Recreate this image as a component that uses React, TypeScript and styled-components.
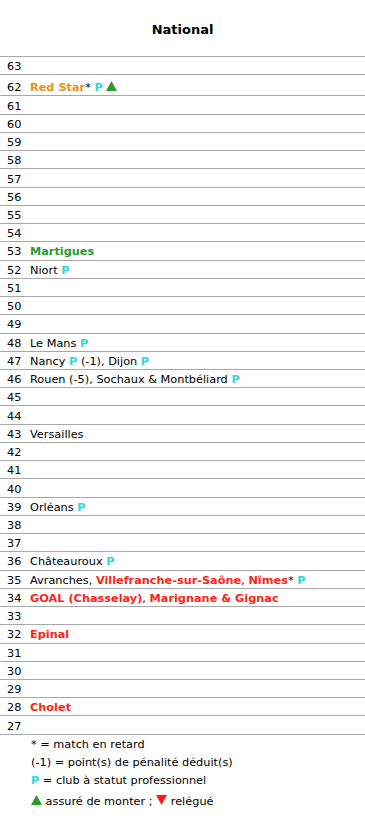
import styled, {createGlobalStyle} from "styled-components";

const GlobalStyle = createGlobalStyle`
    body {
        margin: 0;
        background: #fff;
        font-family: 'DejaVu Sans', Verdana, sans-serif;
        font-size: 11.3px;
        color: #000;
    }
`

type Team = {name: string, color?: 'orange' | 'green' | 'red', star?: boolean, pro?: boolean, up?: boolean, note?: string}

const rows: {pts: number, teams: Team[]}[] = [
    {pts: 63, teams: []},
    {pts: 62, teams: [{name: 'Red Star', color: 'orange', star: true, pro: true, up: true}]},
    {pts: 61, teams: []},
    {pts: 60, teams: []},
    {pts: 59, teams: []},
    {pts: 58, teams: []},
    {pts: 57, teams: []},
    {pts: 56, teams: []},
    {pts: 55, teams: []},
    {pts: 54, teams: []},
    {pts: 53, teams: [{name: 'Martigues', color: 'green'}]},
    {pts: 52, teams: [{name: 'Niort', pro: true}]},
    {pts: 51, teams: []},
    {pts: 50, teams: []},
    {pts: 49, teams: []},
    {pts: 48, teams: [{name: 'Le Mans', pro: true}]},
    {pts: 47, teams: [{name: 'Nancy', pro: true, note: ' (-1)'}, {name: 'Dijon', pro: true}]},
    {pts: 46, teams: [{name: 'Rouen', note: ' (-5)'}, {name: 'Sochaux & Montbéliard', pro: true}]},
    {pts: 45, teams: []},
    {pts: 44, teams: []},
    {pts: 43, teams: [{name: 'Versailles'}]},
    {pts: 42, teams: []},
    {pts: 41, teams: []},
    {pts: 40, teams: []},
    {pts: 39, teams: [{name: 'Orléans', pro: true}]},
    {pts: 38, teams: []},
    {pts: 37, teams: []},
    {pts: 36, teams: [{name: 'Châteauroux', pro: true}]},
    {pts: 35, teams: [{name: 'Avranches'}, {name: 'Villefranche-sur-Saône', color: 'red'}, {name: 'Nîmes', color: 'red', star: true, pro: true}]},
    {pts: 34, teams: [{name: 'GOAL (Chasselay)', color: 'red'}, {name: 'Marignane & Gignac', color: 'red'}]},
    {pts: 33, teams: []},
    {pts: 32, teams: [{name: 'Epinal', color: 'red'}]},
    {pts: 31, teams: []},
    {pts: 30, teams: []},
    {pts: 29, teams: []},
    {pts: 28, teams: [{name: 'Cholet', color: 'red'}]},
    {pts: 27, teams: []},
]

const colors = {orange: '#e8921c', green: '#2b9a2b', red: '#ff2418'}

const Triangle = ({down}: {down?: boolean}) => (
    <TriangleIcon width="11" height="10" viewBox="0 0 11 10">
        {down
            ? <polygon points="0,0 11,0 5.5,10" fill="#ff1a1a"/>
            : <polygon points="0,10 11,10 5.5,0" fill="#2b9a2b"/>}
    </TriangleIcon>
)

const TeamCell = ({team}: {team: Team}) => (
    <>
        <TeamName $color={team.color}>{team.name}</TeamName>
        {team.star && '*'}
        {team.pro && <> <Pro>P</Pro></>}
        {team.note}
        {team.up && <> <Triangle/></>}
    </>
)

export default function App() {
    return (
        <Page>
            <GlobalStyle/>
            <Title>National</Title>
            <Table>
                {rows.map(row => (
                    <Row key={row.pts}>
                        <Points>{row.pts}</Points>
                        <Teams>
                            {row.teams.map((t, i) => (
                                <span key={t.name}>
                                    {i > 0 && ', '}
                                    <TeamCell team={t}/>
                                </span>
                            ))}
                        </Teams>
                    </Row>
                ))}
            </Table>
            <Legend>
                <LegendLine>* = match en retard</LegendLine>
                <LegendLine>(-1) = point(s) de pénalité déduit(s)</LegendLine>
                <LegendLine><Pro>P</Pro> = club à statut professionnel</LegendLine>
                <LegendLine><Triangle/> assuré de monter ; <Triangle down/> relégué</LegendLine>
            </Legend>
        </Page>
    );
}

const Page = styled.div`
    width: 365px;
    min-height: 826px;
`

const Title = styled.h1`
    margin: 0;
    height: 56px;
    display: flex;
    align-items: center;
    justify-content: center;
    padding-top: 2px;
    box-sizing: border-box;
    font-size: 13px;
    font-weight: bold;
`

const Table = styled.div`
    border-bottom: 1px solid #a8a8a8;
`

const Row = styled.div`
    display: flex;
    align-items: baseline;
    border-top: 1px solid #a8a8a8;
    padding-top: 2.15px;
    line-height: 15.1px;
`

const Points = styled.div`
    width: 23px;
    padding-left: 7px;
    flex-shrink: 0;
`

const Teams = styled.div`
    flex: 1;
    white-space: nowrap;
`

const TeamName = styled.span<{$color?: keyof typeof colors}>`
    color: ${p => p.$color ? colors[p.$color] : '#000'};
    font-weight: ${p => p.$color ? 'bold' : 'normal'};
`

const Pro = styled.span`
    color: #2ed8d8;
    font-weight: bold;
`

const TriangleIcon = styled.svg`
    display: inline-block;
    vertical-align: 0;
    margin-top: 4px;
`

const Legend = styled.div`
    padding: 1px 0 0 31px;
`

const LegendLine = styled.div`
    line-height: 18.3px;
`
